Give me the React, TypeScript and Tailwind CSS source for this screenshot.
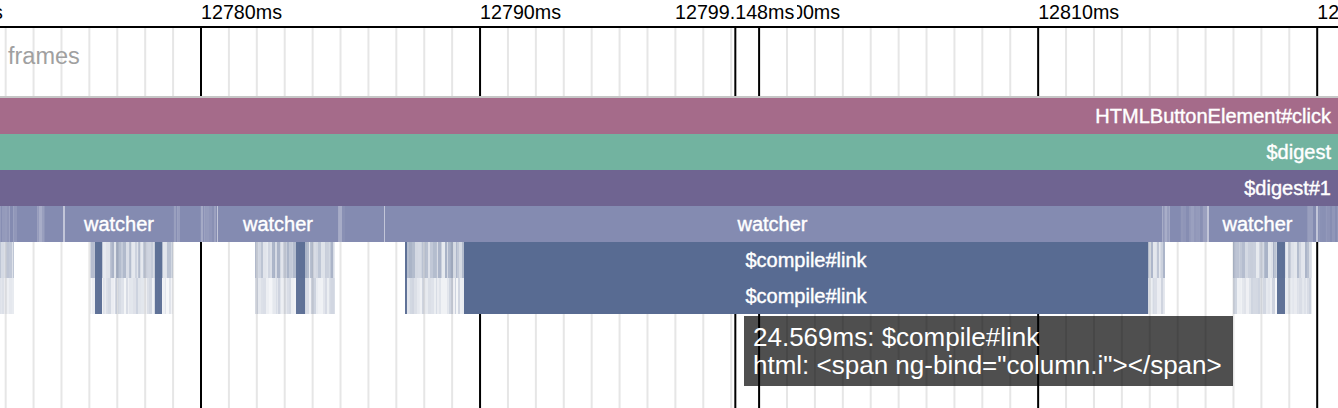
import React from 'react';

const T0 = 12780;
const PX = 27.905;
const X0 = 201;
const CURSOR = 12799.148;
const xAt = (t: number) => X0 + (t - T0) * PX;

const COMPILE = '#586b92';

function rand(seed: number) {
  let s = seed;
  return () => {
    s = (s * 16807) % 2147483647;
    return s / 2147483647;
  };
}

interface Stripe {
  x: number;
  w: number;
  o: number;
}

function stripes(seed: number, from: number, to: number, lo: number, hi: number): Stripe[] {
  const r = rand(seed);
  const out: Stripe[] = [];
  let x = from;
  while (x < to) {
    const w = Math.min(1 + Math.floor(r() * 3), to - x);
    out.push({ x, w, o: lo + r() * (hi - lo) });
    x += w;
  }
  return out;
}

function Grid() {
  const minor = [];
  const major = [];
  for (let t = 12772; t <= 12826; t++) {
    const x = xAt(t);
    if (x < -2 || x > 1340) continue;
    const line = <rect key={t} x={x - 1} y={0} width={2} height={380} fill={t % 10 === 0 ? '#000' : '#e6e6e6'} />;
    if (t % 10 === 0) major.push(line);
    else minor.push(line);
  }
  return (
    <svg className="absolute inset-0" width={1338} height={380}>
      {minor}
      {major}
      <rect x={xAt(CURSOR) - 1} y={0} width={2} height={380} fill="#000" />
    </svg>
  );
}

function Axis() {
  const ticks = [12770, 12780, 12790, 12800, 12810, 12820];
  return (
    <div className="relative h-[28px] border-b-2 border-black text-[19.7px] leading-[22px] text-black">
      {ticks.map((t) => (
        <span key={t} className="absolute top-[1px] whitespace-nowrap" style={{ left: xAt(t) }}>
          {t}ms
        </span>
      ))}
      <span className="absolute left-[672px] top-[1px] whitespace-nowrap bg-white px-[3px]">12799.148ms</span>
    </div>
  );
}

function Bar({ color, label }: { color: string; label: string }) {
  return (
    <div
      className="h-[36px] pr-[7px] text-right text-[20px] leading-[36px] text-white [-webkit-text-stroke:0.4px_white]"
      style={{ background: color }}
    >
      {label}
    </div>
  );
}

// light streaks inside the watcher row, where many tiny watchers sit side by side
function WatcherStreaks({ w, seed, bands, edge }: { w: number; seed: number; bands: [number, number, number][]; edge: [number, number] }) {
  const items = bands.flatMap(([a, b, hi], i) => stripes(seed + i * 31, a, b, 0.02, hi));
  return (
    <svg width={w} height={36} className="block shrink-0">
      {items.map((s, i) => (
        <rect key={i} x={s.x} y={0} width={s.w} height={36} fill="#fff" opacity={s.o} />
      ))}
      <rect x={edge[0]} y={0} width={edge[1]} height={36} fill="#fff" opacity={0.5} />
    </svg>
  );
}

function WatcherSeg({ w }: { w: number }) {
  return (
    <div
      className="h-[36px] shrink-0 text-center text-[20px] leading-[36px] text-white [-webkit-text-stroke:0.4px_white]"
      style={{ width: w }}
    >
      watcher
    </div>
  );
}

function Cluster({ w, seed, dark = [] }: { w: number; seed: number; dark?: [number, number][] }) {
  const up = stripes(seed, 0, w, 0.14, 0.52);
  const low = stripes(seed + 7, 0, w, 0.05, 0.3);
  return (
    <svg width={w} height={72} className="block shrink-0">
      {up.map((s, i) => (
        <rect key={'u' + i} x={s.x} y={0} width={s.w} height={36} fill={COMPILE} opacity={s.o} />
      ))}
      {low.map((s, i) => (
        <rect key={'l' + i} x={s.x} y={36} width={s.w} height={36} fill={COMPILE} opacity={s.o} />
      ))}
      {dark.map(([x, dw], i) => (
        <rect key={'d' + i} x={x} y={0} width={dw} height={72} fill={COMPILE} opacity={0.95} />
      ))}
    </svg>
  );
}

function Gap({ w }: { w: number }) {
  return <div className="h-[72px] shrink-0" style={{ width: w }} />;
}

export default function App() {
  return (
    <div className="relative h-[408px] w-[1338px] overflow-hidden bg-white font-['Liberation_Sans',Arial,sans-serif]">
      <Axis />
      <div className="relative h-[380px]">
        <Grid />
        <div className="relative flex flex-col">
          <div className="h-[68px] pl-[8px] pt-[15px] text-[23.5px] leading-[27px] text-[#a0a0a0]">frames</div>
          <div className="h-[2px] bg-[#c6c6c6]" />
          <Bar color="#a56b8a" label="HTMLButtonElement#click" />
          <Bar color="#72b3a0" label="$digest" />
          <Bar color="#6f6491" label="$digest#1" />

          <div className="flex h-[36px] bg-[#848bb1]">
            <WatcherStreaks w={65} seed={11} bands={[[0, 10, 0.3], [13, 17, 0.35], [37, 45, 0.3]]} edge={[63, 2]} />
            <WatcherSeg w={108} />
            <WatcherStreaks w={45} seed={23} bands={[[0, 7, 0.3], [27, 30, 0.35], [30, 44, 0.2]]} edge={[44, 1]} />
            <WatcherSeg w={120} />
            <WatcherStreaks w={47} seed={37} bands={[[0, 7, 0.3]]} edge={[46, 1]} />
            <WatcherSeg w={775} />
            <WatcherStreaks w={49} seed={53} bands={[[2, 10, 0.3], [20, 47, 0.2]]} edge={[47, 2]} />
            <WatcherSeg w={97} />
            <WatcherStreaks w={32} seed={71} bands={[[1, 7, 0.3], [12, 32, 0.12]]} edge={[10, 2]} />
          </div>

          <div className="flex h-[72px]">
            <Cluster w={14} seed={5} />
            <Gap w={76} />
            <Cluster w={83} seed={17} dark={[[5, 7], [65, 7]]} />
            <Gap w={82} />
            <Cluster w={80} seed={29} dark={[[41, 9]]} />
            <Gap w={70} />
            <Cluster w={59} seed={41} dark={[[0, 2]]} />
            <div className="h-[72px] w-[684px] shrink-0 bg-[#586b92] text-center text-[20px] leading-[36px] text-white [-webkit-text-stroke:0.4px_white]">
              <div className="h-[36px]">$compile#link</div>
              <div className="h-[36px]">$compile#link</div>
            </div>
            <Cluster w={17} seed={59} />
            <Gap w={68} />
            <Cluster w={79} seed={67} dark={[[44, 8]]} />
          </div>
        </div>
      </div>

      <div className="absolute left-[744px] top-[316px] h-[70px] w-[489px] whitespace-nowrap bg-[rgba(0,0,0,0.69)] py-[7px] pl-[9px] text-[26px] leading-[28px] text-white">
        <div>24.569ms: $compile#link</div>
        <div>html: &lt;span ng-bind="column.i"&gt;&lt;/span&gt;</div>
      </div>
    </div>
  );
}
